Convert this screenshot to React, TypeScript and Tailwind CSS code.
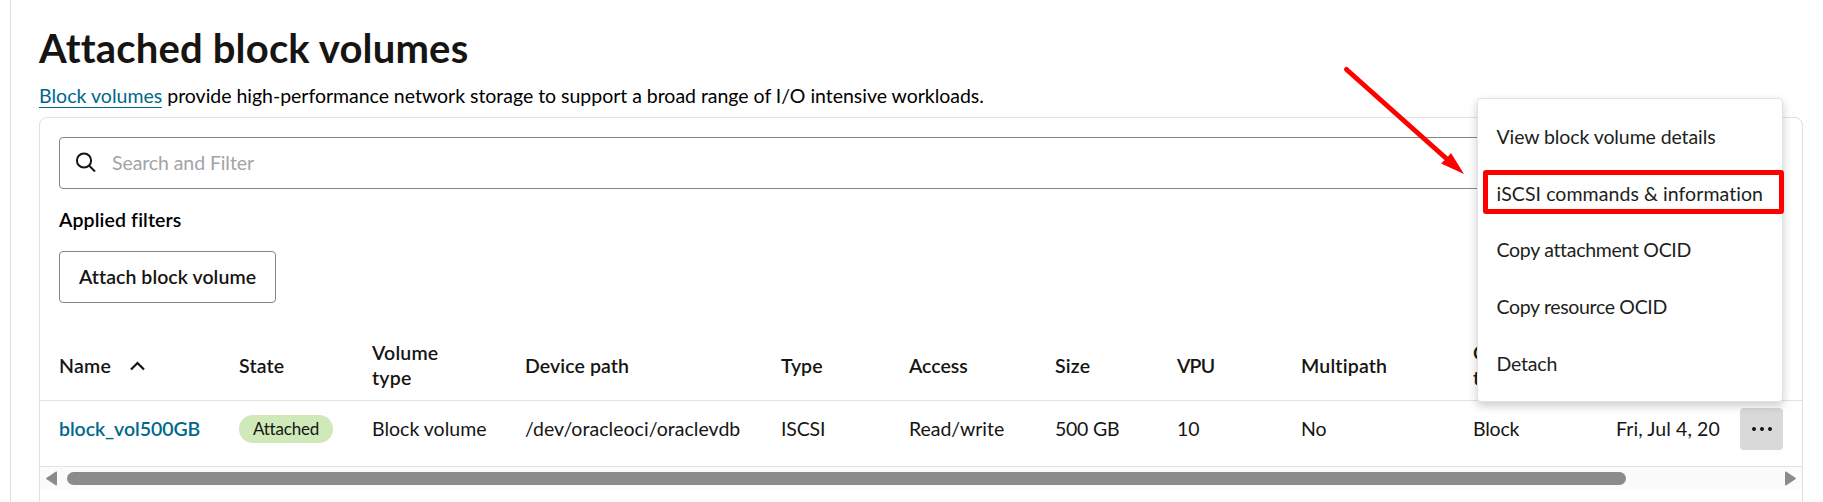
import type { ReactNode } from "react";

const columns: { label: string; sorted?: boolean; className: string }[] = [
  { label: "Name", sorted: true, className: "w-[140px] tracking-[0.3px]" },
  { label: "State", className: "w-[90px] tracking-[0.2px]" },
  { label: "Volume type", className: "w-[90px] tracking-[0.2px]" },
  { label: "Device path", className: "w-[140px] tracking-[0.1px]" },
  { label: "Type", className: "w-[90px]" },
  { label: "Access", className: "w-[90px]" },
  { label: "Size", className: "w-[90px] tracking-[0.2px]" },
  { label: "VPU", className: "w-[90px] tracking-[-0.8px]" },
  { label: "Multipath", className: "w-[90px] tracking-[0.2px]" },
  { label: "C t", className: "w-[14px]" },
];

const menuItems: { label: string; className: string }[] = [
  { label: "View block volume details", className: "tracking-[-0.1px]" },
  { label: "iSCSI commands & information", className: "tracking-[0.07px]" },
  { label: "Copy attachment OCID", className: "tracking-[-0.3px]" },
  { label: "Copy resource OCID", className: "tracking-[-0.34px]" },
  { label: "Detach", className: "tracking-[-0.2px]" },
];

function Row({ children, className }: { children: ReactNode; className: string }) {
  return (
    <div
      className={`grid grid-cols-[180px_133px_153px_256px_128px_146px_122px_124px_172px_143px_123px_1fr] items-center border-b border-[#e3e3e3] pl-[19px] ${className}`}
    >
      {children}
    </div>
  );
}

function SearchBox() {
  return (
    <div className="mx-[19px] flex h-[52px] shrink-0 items-center rounded-[4px] border border-[#868686] pl-[14px]">
      <svg width="24" height="24" viewBox="0 0 24 24" fill="none" stroke="#161513" strokeWidth="2">
        <circle cx="10" cy="9.5" r="7.1" />
        <path d="M15 14.5l6 6" />
      </svg>
      <span className="ml-[14px] pb-[2px] tracking-[-0.09px] text-[#a3a3a3]">Search and Filter</span>
    </div>
  );
}

function Scrollbar() {
  return (
    <div className="flex h-[23px] shrink-0 items-center bg-[#fbfbfb] px-[6px]">
      <svg width="11" height="15" viewBox="0 0 11 15" fill="#8b8b8b">
        <path d="M10 .5Q11 .3 11 1.5v12q0 1.2-1 1L.6 8.300q-.8-.8 0-1.600z" />
      </svg>
      <div className="ml-[10px] h-[13px] w-[1559px] rounded-full bg-[#8b8b8b]" />
      <svg className="ml-auto" width="11" height="15" viewBox="0 0 11 15" fill="#8b8b8b">
        <path d="M1 .5Q0 .3 0 1.5v12q0 1.2 1 1L10.400 8.300q.8-.8 0-1.600z" />
      </svg>
    </div>
  );
}

function ActionsMenu() {
  return (
    <div className="absolute top-[98px] left-[1477px] h-[304px] w-[306px] rounded-[4px] border border-[#e2e2e2] bg-white pt-[9px] shadow-[0_4px_10px_rgba(0,0,0,0.2)]">
      {menuItems.map((item) => (
        <div
          key={item.label}
          className={`flex h-[56.7px] items-center pl-[18.5px] whitespace-nowrap text-[#201e1c] ${item.className}`}
        >
          {item.label}
        </div>
      ))}
    </div>
  );
}

export default function App() {
  return (
    <div className="relative flex h-[502px] w-[1823px] overflow-hidden bg-white font-['Lato','Noto_Sans',sans-serif] text-[19.5px] leading-[25px] text-[#161513]">
      <div className="w-[11px] shrink-0 border-r border-[#e0e0e0]" />
      <main className="flex w-[1792px] flex-col pl-[28px]">
        <h1 className="shrink-0 pt-[23px] text-[40px] leading-[50px] font-bold tracking-[0.17px]">Attached block volumes</h1>
        <p className="mt-[10px] h-[34px] shrink-0 leading-[25px] tracking-[-0.025px] whitespace-nowrap text-black">
          <a className="inline-block border-b border-[#00688c] leading-[22px] tracking-[0.03px] text-[#00688c]">Block volumes</a>{" "}
          provide high-performance network storage to support a broad range of I/O intensive workloads.
        </p>
        <section className="flex h-[420px] w-[1764px] shrink-0 flex-col rounded-t-[8px] border border-[#e0e0e0] pt-[19px]">
          <SearchBox />
          <div className="mt-[18px] pl-[19px] leading-[25px] font-semibold tracking-[0.12px] text-black">Applied filters</div>
          <button className="mt-[19px] ml-[19px] h-[52px] w-[217px] shrink-0 rounded-[4px] border border-[#868686] pb-px font-semibold tracking-[0.06px]">
            Attach block volume
          </button>
          <Row className="mt-[29px] h-[69px] shrink-0 pb-[2px] font-semibold">
            {columns.map((c) => (
              <div key={c.label} className={`flex items-center ${c.className}`}>
                {c.label}
                {c.sorted && (
                  <svg className="mt-[2px] ml-[18.5px]" width="15" height="10" viewBox="0 0 15 10" fill="none" stroke="#161513" strokeWidth="2.2">
                    <path d="M1 8.500L7.500 2L14 8.500" />
                  </svg>
                )}
              </div>
            ))}
          </Row>
          <Row className="h-[66px] shrink-0 pb-[10px] whitespace-nowrap">
            <a className="font-semibold tracking-[-0.06px] text-[#00688c]">block_vol500GB</a>
            <span className="flex h-[28px] w-[94px] items-center justify-center rounded-full bg-[#cfe9b8] text-[17px] tracking-[-0.2px]">Attached</span>
            <span>Block volume</span>
            <span className="tracking-[0.04px]">/dev/oracleoci/oraclevdb</span>
            <span className="tracking-[-0.15px]">ISCSI</span>
            <span className="tracking-[-0.05px]">Read/write</span>
            <span className="tracking-[-0.25px]">500 GB</span>
            <span>10</span>
            <span>No</span>
            <span className="tracking-[-0.2px]">Block</span>
            <span className="tracking-[0.09px]">Fri, Jul 4, 20</span>
            <button className="ml-[1px] flex h-[42px] w-[43px] items-center justify-center rounded-[4px] bg-[#d9d9d9]">
              <svg width="20" height="4" viewBox="0 0 20 4" fill="#161513">
                <circle cx="2" cy="2" r="2" />
                <circle cx="10" cy="2" r="2" />
                <circle cx="18" cy="2" r="2" />
              </svg>
            </button>
          </Row>
          <Scrollbar />
        </section>
      </main>
      <ActionsMenu />
      <div className="absolute top-[170px] left-[1483px] h-[44px] w-[301px] rounded-[3px] border-5 border-[#ff0000]" />
      <svg className="absolute top-[60px] left-[1340px]" width="130" height="120" viewBox="1340 60 130 120">
        <path d="M1346.500 69.500L1448 160" stroke="#ff0000" strokeWidth="5" strokeLinecap="round" />
        <path d="M1464 174L1441 163.500L1446 159L1451 153z" fill="#ff0000" />
      </svg>
    </div>
  );
}
